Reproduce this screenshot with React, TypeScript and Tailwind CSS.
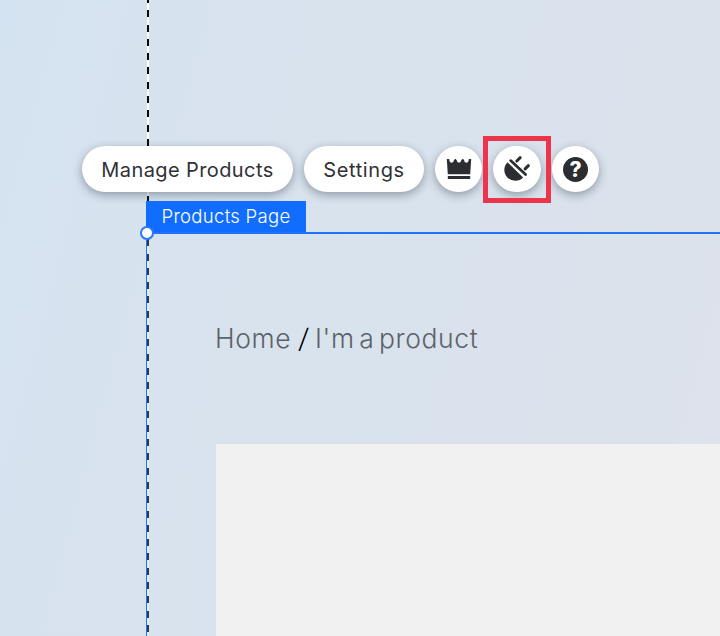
import React from "react";

const pill =
  "flex h-[46px] shrink-0 items-center justify-center whitespace-nowrap rounded-full bg-white text-[#2f3137] shadow-[0_3px_10px_rgba(22,35,51,0.38)]";

function CrownIcon() {
  return (
    <svg width="26" height="24" viewBox="0 0 26 24" fill="#2b2d31">
      <path d="M.8 2 L3.2 2 Q3.4 5.8 5.7 5.8 Q7.7 5.8 8 3 L9.2 1.8 L10.6 3 Q11 5.8 13 5.8 Q15 5.8 15.4 3 L16.8 1.8 L18 3 Q18.3 5.8 20.3 5.8 Q22.6 5.8 22.8 2 L25.2 2 L24.2 17.2 H1.8 Z" />
      <rect x="1.8" y="19" width="22.4" height="3" />
    </svg>
  );
}

function PlugIcon() {
  return (
    <svg width="30" height="30" viewBox="0 0 30 30" fill="none" stroke="#2b2d31">
      <path d="M5.5 8.2 L21.1 23.6 A10.7 10.7 0 1 1 5.5 8.2 Z" fill="#2b2d31" stroke="none" />
      <path d="M8.6 6.6 L23.6 20.6" strokeWidth="2.7" strokeLinecap="round" />
      <path d="M14.8 7 L18.2 3.7 M23.1 14.9 L26.4 11.7" strokeWidth="3" strokeLinecap="round" />
    </svg>
  );
}

export default function App() {
  return (
    <main className="relative h-[636px] w-[720px] overflow-hidden bg-[linear-gradient(105deg,#d4e3f1_0%,#d7e2ef_18%,#d9e3ed_48%,#dae2ec_75%,#dee2eb_100%)] pt-[146px] font-['Inter',sans-serif]">
      <div className="absolute left-[147px] top-0 h-[234px] w-[2px] bg-[repeating-linear-gradient(180deg,#080a0c_0px,#080a0c_7px,#ffffff_7px,#ffffff_14.28px)] [background-position:0_-4px]" />

      <div className="relative ml-[82px] flex gap-[11px] text-[20px] font-normal">
        <button className={`${pill} w-[211px] pt-px tracking-[0.4px]`}>Manage Products</button>
        <button className={`${pill} w-[120px] pt-px tracking-[0.6px]`}>Settings</button>
        <button className={`${pill} w-[47px]`} aria-label="Upgrade">
          <CrownIcon />
        </button>
        <div className="relative">
          <button className={`${pill} w-[48px]`} aria-label="Connect">
            <PlugIcon />
          </button>
          <div className="absolute -left-[10px] -top-[10px] h-[67px] w-[68px] border-[5px] border-[#ec344b]" />
        </div>
        <button className={`${pill} w-[47px]`} aria-label="Help">
          <span className="flex size-[25px] items-center justify-center rounded-full bg-[#2b2d31] text-[21px] font-extrabold leading-none text-white">?</span>
        </button>
      </div>

      <div className="relative ml-[146px] mt-[9px] flex h-[31px] w-[160px] items-center justify-center bg-[#116dff] text-[18.5px] font-[350] tracking-[0.3px] text-white">
        Products Page
      </div>

      <section className="relative ml-[146px] h-[405px] border-l border-t-2 border-[#1f73fb] pl-[69px]">
        <div className="absolute left-0 top-0 h-[420px] w-[2px] bg-[repeating-linear-gradient(180deg,#303846_0px,#303846_7px,#e5edf6_7px,#e5edf6_14.28px)] [background-position:0_-9px]" />
        <div className="absolute -left-[7px] -top-[8px] size-[14px] rounded-full border-2 border-[#2878fa] bg-white" />
        <nav className="flex h-[210px] items-center whitespace-nowrap text-[26.5px] font-[330] tracking-[0.6px] text-[#5c6168] [word-spacing:-3.5px]">
          <span className="-ml-px">Home</span>
          <span className="ml-[8px] mr-[6px] -skew-x-6 text-black">/</span>
          <span>I'm a product</span>
        </nav>
        <div className="h-[193px] bg-[#f1f1f1]" />
      </section>
    </main>
  );
}
